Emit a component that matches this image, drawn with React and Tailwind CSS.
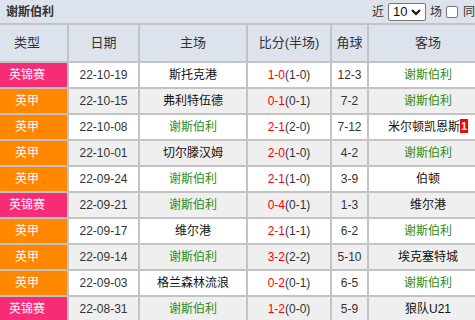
import React from "react";

const rows = [
  ["英锦赛", "22-10-19", "斯托克港", "1-0", "(1-0)", "12-3", "谢斯伯利"],
  ["英甲", "22-10-15", "弗利特伍德", "0-1", "(0-1)", "7-2", "谢斯伯利"],
  ["英甲", "22-10-08", "谢斯伯利", "2-1", "(2-0)", "7-12", "米尔顿凯恩斯", "1"],
  ["英甲", "22-10-01", "切尔滕汉姆", "2-0", "(1-0)", "4-2", "谢斯伯利"],
  ["英甲", "22-09-24", "谢斯伯利", "2-1", "(1-0)", "3-9", "伯顿"],
  ["英锦赛", "22-09-21", "谢斯伯利", "0-4", "(0-1)", "1-3", "维尔港"],
  ["英甲", "22-09-17", "维尔港", "2-1", "(1-1)", "6-2", "谢斯伯利"],
  ["英甲", "22-09-14", "谢斯伯利", "3-2", "(2-2)", "5-10", "埃克塞特城"],
  ["英甲", "22-09-03", "格兰森林流浪", "0-2", "(0-1)", "6-5", "谢斯伯利"],
  ["英锦赛", "22-08-31", "谢斯伯利", "1-2", "(0-0)", "5-9", "狼队U21"],
];

const team = "谢斯伯利";

function TeamName({ name, badge }) {
  return (
    <span className={name === team ? "text-[#2f8c14]" : "text-[#111]"}>
      {name}
      {badge && (
        <span className="inline-block bg-[#ff0000] text-white font-bold text-[11px] leading-[14px] px-[1px] align-[1px]">
          {badge}
        </span>
      )}
    </span>
  );
}

export default function App() {
  return (
    <div
      className="w-[487px] h-[320px] overflow-hidden bg-white text-[12px] text-[#333]"
      style={{ fontFamily: '"Liberation Sans", "Noto Sans CJK SC", sans-serif' }}
    >
      {/* title bar */}
      <div className="h-[23px] bg-[#dce3ec] flex items-center justify-between pl-[6px]">
        <span className="font-bold text-[#333]">谢斯伯利</span>
        <div className="flex items-center gap-[4px]">
          <span>近</span>
          <div className="w-[38px] h-[18px] bg-white border border-[#767676] rounded-[2px] flex items-center justify-between px-[4px] text-[#111]">
            <span className="text-[13px]">10</span>
            <svg width="10" height="8" viewBox="0 0 10 8">
              <path d="M1 2 L5 6 L9 2" fill="none" stroke="#111" strokeWidth="2" />
            </svg>
          </div>
          <span>场</span>
          <span className="w-[12px] h-[12px] bg-white border border-[#767676] rounded-[2px]" />
          <span className="ml-[1px]">同主</span>
        </div>
      </div>

      {/* table */}
      <div className="grid grid-cols-[67px_69px_106px_82px_35px_118px] gap-[2px] bg-[#c3c3c3] pt-[2px]">
        {["类型", "日期", "主场", "比分(半场)", "角球", "客场"].map((h, i) => (
          <div
            key={h}
            className={`h-[36px] bg-[#dce3ec] flex items-center justify-center text-[13px] text-[#333] ${i === 0 ? "pr-[13px]" : ""}`}
          >
            {h}
          </div>
        ))}
        {rows.map((r, i) => {
          const bg = i % 2 === 0 ? "bg-white" : "bg-[#efefef]";
          return (
            <React.Fragment key={i}>
              <div
                className={`h-[24px] flex items-center justify-center pr-[13px] text-white text-[12px] ${r[0] === "英锦赛" ? "bg-[#f72c77]" : "bg-[#ff8800]"}`}
              >
                {r[0]}
              </div>
              <div className={`${bg} flex items-center justify-center text-[#333]`}>{r[1]}</div>
              <div className={`${bg} flex items-center justify-center`}>
                <TeamName name={r[2]} />
              </div>
              <div className={`${bg} flex items-center justify-center`}>
                <span className="text-[#ff0000]">{r[3]}</span>
                <span className="text-[#333]">{r[4]}</span>
              </div>
              <div className={`${bg} flex items-center justify-center text-[#333]`}>{r[5]}</div>
              <div className={`${bg} flex items-center justify-center`}>
                <TeamName name={r[6]} badge={r[7]} />
              </div>
            </React.Fragment>
          );
        })}
      </div>
    </div>
  );
}
